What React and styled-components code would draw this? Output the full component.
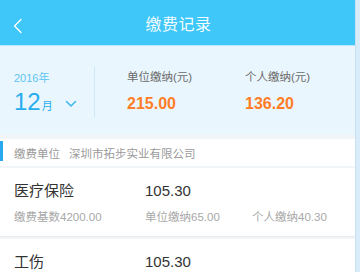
import styled, { createGlobalStyle } from 'styled-components';

const GlobalStyle = createGlobalStyle`
  html, body {
    margin: 0;
    padding: 0;
    background: #d9ecf9;
  }
  body {
    font-family: "Liberation Sans", "Noto Sans CJK SC", sans-serif;
  }
`;

const records = [
  { name: '医疗保险', total: '105.30', base: '4200.00', unit: '65.00', personal: '40.30' },
  { name: '工伤', total: '105.30', base: '4200.00', unit: '65.00', personal: '40.30' },
];

const App = () => {
  return (
    <>
      <GlobalStyle />
      <Page>
        <Header>
          <BackButton>
            <svg width="12" height="16" viewBox="0 0 12 16">
              <path d="M9 1.5 L2.5 8 L9 14.5" fill="none" stroke="#ffffff" strokeWidth="1.4" strokeLinecap="round" strokeLinejoin="round" />
            </svg>
          </BackButton>
          <Title>缴费记录</Title>
        </Header>

        <Summary>
          <DatePicker>
            <Year>2016年</Year>
            <MonthRow>
              <Month>12</Month>
              <MonthUnit>月</MonthUnit>
              <svg width="12" height="8" viewBox="0 0 12 8">
                <path d="M1.5 1.5 L6 6 L10.5 1.5" fill="none" stroke="#3db6f0" strokeWidth="1.5" strokeLinecap="round" strokeLinejoin="round" />
              </svg>
            </MonthRow>
          </DatePicker>
          <Divider />
          <Amounts>
            <AmountBlock>
              <AmountLabel>单位缴纳(元)</AmountLabel>
              <AmountValue>215.00</AmountValue>
            </AmountBlock>
            <AmountBlock>
              <AmountLabel>个人缴纳(元)</AmountLabel>
              <AmountValue>136.20</AmountValue>
            </AmountBlock>
          </Amounts>
        </Summary>

        <CompanyRow>
          <CompanyLabel>缴费单位</CompanyLabel>
          <CompanyName>深圳市拓步实业有限公司</CompanyName>
        </CompanyRow>

        {records.map((r) => (
          <Record key={r.name}>
            <RecordName>{r.name}</RecordName>
            <RecordTotal>{r.total}</RecordTotal>
            <span />
            <Detail>缴费基数{r.base}</Detail>
            <Detail>单位缴纳{r.unit}</Detail>
            <Detail>个人缴纳{r.personal}</Detail>
          </Record>
        ))}
      </Page>
    </>
  );
};

const Page = styled.div`
  width: 356px;
  height: 272px;
  overflow: hidden;
  background: #f2f5f7;
  border-right: 1px solid #c9e0f0;
  box-sizing: border-box;
`;

const Header = styled.div`
  position: relative;
  height: 45px;
  background: #3ec7f8;
  display: flex;
  align-items: center;
  justify-content: center;
  border-bottom: 1px solid #b9e6fa;
`;

const BackButton = styled.div`
  position: absolute;
  left: 12px;
  top: 18px;
  display: flex;
`;

const Title = styled.div`
  color: #f4fcff;
  font-size: 16px;
  letter-spacing: 0.5px;
  margin-left: 2px;
`;

const Summary = styled.div`
  height: 89px;
  background: #eaf6fd;
  display: flex;
  align-items: center;
  padding-left: 14px;
`;

const DatePicker = styled.div`
  width: 80px;
  display: flex;
  flex-direction: column;
  gap: 4px;
  margin-top: 2px;
`;

const Year = styled.div`
  color: #5cc4f2;
  font-size: 11px;
`;

const MonthRow = styled.div`
  display: flex;
  align-items: baseline;
  color: #28adee;
  svg {
    margin-left: 12px;
    align-self: center;
    margin-top: 4px;
  }
`;

const Month = styled.span`
  font-size: 24px;
  line-height: 26px;
`;

const MonthUnit = styled.span`
  font-size: 11px;
  margin-left: 1px;
`;

const Divider = styled.div`
  width: 1px;
  height: 50px;
  background: #cce9f8;
  margin-top: 2px;
`;

const Amounts = styled.div`
  display: grid;
  grid-template-columns: 118px 100px;
  padding-left: 32px;
`;

const AmountBlock = styled.div`
  display: flex;
  flex-direction: column;
  gap: 11px;
`;

const AmountLabel = styled.div`
  color: #6a6a6a;
  font-size: 11.5px;
`;

const AmountValue = styled.div`
  color: #ff7d26;
  font-size: 16px;
  font-weight: bold;
`;

const CompanyRow = styled.div`
  position: relative;
  margin-top: 4px;
  height: 27px;
  background: #ffffff;
  display: flex;
  align-items: center;
  padding-left: 14px;
  gap: 9px;
  font-size: 11.5px;
  color: #9a9a9a;
  &::before {
    content: '';
    position: absolute;
    left: 0;
    top: 2px;
    width: 3px;
    height: 20px;
    background: #2aa8ef;
  }
`;

const CompanyLabel = styled.span``;

const CompanyName = styled.span``;

const Record = styled.div`
  margin-top: 2px;
  background: #ffffff;
  display: grid;
  grid-template-columns: 131px 107px 1fr;
  row-gap: 8px;
  padding: 13px 0 11px 14px;
  border-bottom: 1px solid #ececec;
`;

const RecordName = styled.div`
  color: #333;
  font-size: 15px;
  line-height: 20px;
`;

const RecordTotal = styled.div`
  color: #333;
  font-size: 15px;
  line-height: 20px;
`;

const Detail = styled.div`
  color: #a8a8a8;
  font-size: 11.5px;
  line-height: 16px;
`;

export default App;
